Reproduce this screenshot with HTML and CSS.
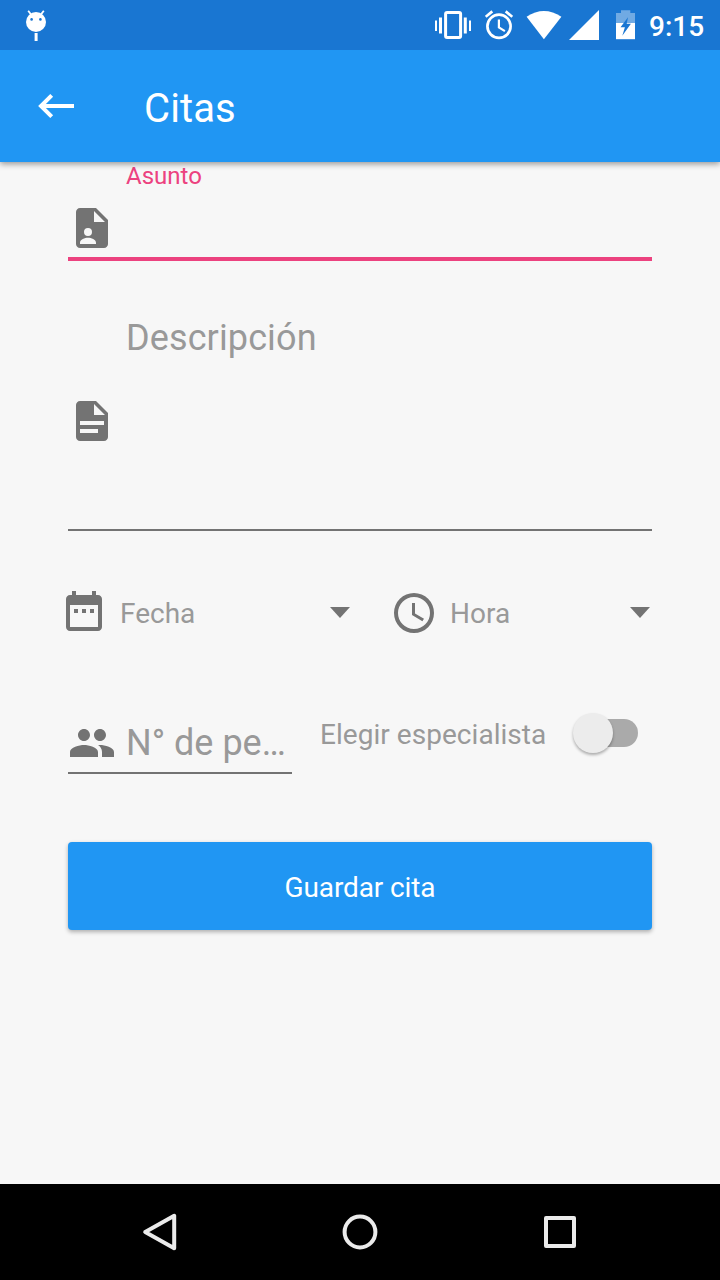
FILE: index.html
```html
<!DOCTYPE html>
<html lang="es">
<head>
<meta charset="utf-8">
<title>Citas</title>
<link rel="stylesheet" href="styles.css">
</head>
<body>
<div class="screen">
  <div class="status-bar">
    <svg class="debug-icon" width="22" height="32" viewBox="25 10 22 32">
      <path d="M28.2 10.8l3.8 5M43.8 10.8l-3.8 5" stroke="#fff" stroke-width="1.8"/>
      <circle cx="36" cy="22" r="10" fill="#fff"/>
      <circle cx="31.6" cy="19.4" r="1.3" fill="#1976d2"/><circle cx="40.4" cy="19.4" r="1.3" fill="#1976d2"/>
      <path d="M34.6 33h3v8h-3z" fill="#fff"/>
    </svg>
    <div class="indicators">
      <svg width="36" height="30" viewBox="435 10 36 30" fill="#fff">
        <rect x="445.6" y="12.6" width="15" height="24.8" rx="1.5" fill="none" stroke="#fff" stroke-width="3"/>
        <path d="M435 20.5h2v10.5h-2zM439 17.5h3v16h-3zM463.8 17.5h3v16h-3zM469 20.5h2v10.5h-2z"/>
      </svg>
      <svg width="28" height="30" viewBox="485 10 28 30" fill="none" stroke="#fff" stroke-width="2.7">
        <circle cx="499" cy="26.3" r="11.6"/>
        <path d="M485.7 16.8l6.6-5.4M512.3 16.8l-6.6-5.4"/>
        <path d="M498.9 19.5v8l6 3.6" stroke-width="2.2"/>
      </svg>
      <svg width="36" height="30" viewBox="526 10 36 30" fill="#fff">
        <path d="M526.6 16.8Q543.9 5.2 561.4 16.8L543.9 39.2z"/>
      </svg>
      <svg width="31" height="30" viewBox="569 10 31 30" fill="#fff">
        <path d="M569 40h30V10z"/>
      </svg>
      <svg width="19" height="30" viewBox="616 10 19 30">
        <path d="M616 13h5v-2.7h9.3V13h4.7v10h-19z" fill="#fff" fill-opacity=".38"/>
        <path d="M616 23h19v16.2h-19z" fill="#fff"/>
        <path d="M628 17.2L620.5 27.3h4.4l-2.6 8.4 8.6-12h-4.2z" fill="#1976d2"/>
      </svg>
      <span class="clock">9:15</span>
    </div>
  </div>

  <header class="app-bar">
    <svg width="36" height="24" viewBox="0 0 36 24" fill="none" stroke="#fff" stroke-width="4">
      <path d="M36 12H3M13.7 1.4L3 12l10.7 10.6"/>
    </svg>
    <h1 class="title">Citas</h1>
  </header>

  <main class="form">
    <div class="field subject">
      <label class="floating-label">Asunto</label>
      <svg class="icon" viewBox="0 0 24 24">
        <path d="M14 2H6c-1.1 0-2 .9-2 2v16c0 1.1.9 2 2 2h12c1.1 0 2-.9 2-2V8z"/>
        <path class="cutout" d="M13 3.5V9h5.5zM10 12a2 2 0 1 1 0 4 2 2 0 0 1 0-4zM6 20v-.6c0-1.6 2.4-2.5 4-2.5s4 .9 4 2.5v.6z"/>
      </svg>
    </div>

    <div class="field description">
      <label class="hint">Descripción</label>
      <svg class="icon" viewBox="0 0 24 24">
        <path d="M14 2H6c-1.1 0-2 .9-2 2v16c0 1.1.9 2 2 2h12c1.1 0 2-.9 2-2V8z"/>
        <path class="cutout" d="M13 3.5V9h5.5zM6 12h12v2H6zM6 16h9v2H6z"/>
      </svg>
    </div>

    <div class="pickers">
      <div class="picker">
        <svg class="icon" viewBox="0 0 24 24">
          <path d="M9 10H7v2h2zm4 0h-2v2h2zm4 0h-2v2h2zM19 3h-1V1h-2v2H8V1H6v2H5c-1.1 0-2 .9-2 2v14c0 1.1.9 2 2 2h14c1.1 0 2-.9 2-2V5c0-1.1-.9-2-2-2zm0 16H5V8h14z"/>
        </svg>
        <span class="label">Fecha</span>
        <span class="caret"></span>
      </div>
      <div class="picker">
        <svg class="icon" viewBox="0 0 24 24">
          <path d="M12 2a10 10 0 1 0 0 20 10 10 0 0 0 0-20zm0 18a8 8 0 1 1 0-16 8 8 0 0 1 0 16zM12.5 7H11v6l5.2 3.1.8-1.2-4.5-2.7z"/>
        </svg>
        <span class="label">Hora</span>
        <span class="caret"></span>
      </div>
    </div>

    <div class="options">
      <div class="field people">
        <svg class="icon" viewBox="0 0 24 24">
          <path d="M16 11c1.66 0 2.99-1.34 2.99-3S17.66 5 16 5s-3 1.34-3 3 1.34 3 3 3zm-8 0c1.66 0 2.99-1.34 2.99-3S9.66 5 8 5 5 6.34 5 8s1.34 3 3 3zm0 2c-2.33 0-7 1.17-7 3.5V19h14v-2.5c0-2.33-4.67-3.5-7-3.5zm8 0c-.29 0-.62.02-.97.05 1.16.84 1.97 1.97 1.97 3.45V19h6v-2.5c0-2.33-4.67-3.5-7-3.5z"/>
        </svg>
        <span class="hint">N° de pe…</span>
      </div>
      <span class="label specialist">Elegir especialista</span>
      <span class="switch"><span class="thumb"></span></span>
    </div>

    <button class="save">Guardar cita</button>
  </main>

  <nav class="nav-bar">
    <svg width="40" height="40" viewBox="0 0 40 40"><path d="M34.2 3.8v32.4L5.2 20z"/></svg>
    <svg width="40" height="40" viewBox="0 0 40 40"><circle cx="20" cy="20" r="15.4"/></svg>
    <svg width="40" height="40" viewBox="0 0 40 40"><rect x="6" y="6" width="28" height="28"/></svg>
  </nav>
</div>
</body>
</html>
```

FILE: styles.css
```css
* { box-sizing: border-box; }
body { margin: 0; font-family: Roboto, sans-serif; background: #f7f7f7; }
svg { display: block; flex: none; }

.screen { width: 720px; height: 1280px; display: flex; flex-direction: column; overflow: hidden; }

.status-bar {
  height: 50px;
  flex: none;
  display: flex;
  justify-content: space-between;
  padding: 10px 16px 0 25px;
  background: #1976d2;
  color: #fff;
}
.indicators { display: flex; }
.indicators svg:nth-of-type(2) { margin-left: 14px; }
.indicators svg:nth-of-type(3) { margin-left: 13px; }
.indicators svg:nth-of-type(4) { margin-left: 7px; }
.indicators svg:nth-of-type(5) { margin-left: 16px; }
.clock { width: 55px; margin-left: 14px; font-size: 28px; line-height: 33px; font-weight: 500; white-space: nowrap; }

.app-bar {
  height: 112px;
  flex: none;
  display: flex;
  align-items: center;
  padding-left: 38px;
  background: #2096f3;
  color: #fff;
  box-shadow: 0 2px 6px rgba(0, 0, 0, .4);
  clip-path: inset(0 0 -10px 0);
}
.title { margin: 6px 0 0 70px; font-size: 40px; line-height: 48px; font-weight: 400; letter-spacing: .1px; }

.form { flex: 1; padding: 0 68px; color: #999; }
.icon { width: 48px; height: 48px; fill: #737373; }
.cutout { fill: #f7f7f7; }
.hint { font-size: 36px; line-height: 42px; white-space: nowrap; }
.label { font-size: 28px; line-height: 34px; white-space: nowrap; }

.field { border-bottom: 2px solid #737373; }
.subject { height: 99px; border-bottom: 4px solid #ec427f; }
.floating-label { display: block; padding: 0 0 14px 58px; font-size: 24px; line-height: 28px; color: #ec427f; }
.description { height: 270px; padding-top: 56px; }
.description .hint { display: block; margin: 0 0 38px 58px; letter-spacing: .12px; }

.pickers { display: grid; grid-template-columns: 290px 260px; gap: 40px; margin: 58px 0 0 -8px; width: 590px; }
.picker { display: flex; align-items: center; }
.picker .label { flex: 1; padding: 1px 0 0 12px; }
.caret { width: 20px; height: 11px; margin-bottom: 1px; background: #737373; clip-path: polygon(0 0, 100% 0, 50% 100%); }

.options { display: flex; align-items: flex-start; margin-top: 80px; }
.people { width: 224px; height: 57px; display: flex; }
.people .icon { margin-top: 2px; }
.people .hint { padding: 5px 0 0 10px; }
.specialist { margin: 1px 0 0 28px; letter-spacing: .04px; }
.switch { position: relative; width: 60px; height: 28px; margin: 2px 14px 0 auto; border-radius: 14px; background: #aaa; }
.thumb { position: absolute; left: -5px; top: -6px; width: 40px; height: 40px; border-radius: 50%; background: #ececec; box-shadow: 0 2px 3px rgba(0, 0, 0, .3); }

.save {
  display: block;
  width: 100%;
  height: 88px;
  margin-top: 68px;
  padding: 3px 0 0;
  border: 0;
  border-radius: 4px;
  background: #2096f3;
  color: #fff;
  font: 28px Roboto, sans-serif;
  letter-spacing: -.12px;
  box-shadow: 0 2px 4px rgba(0, 0, 0, .3);
}

.nav-bar {
  height: 96px;
  flex: none;
  display: flex;
  justify-content: space-between;
  align-items: center;
  padding: 0 140px;
  background: #000;
  fill: none;
  stroke: #ebebeb;
  stroke-width: 4;
  stroke-linejoin: round;
}
```
